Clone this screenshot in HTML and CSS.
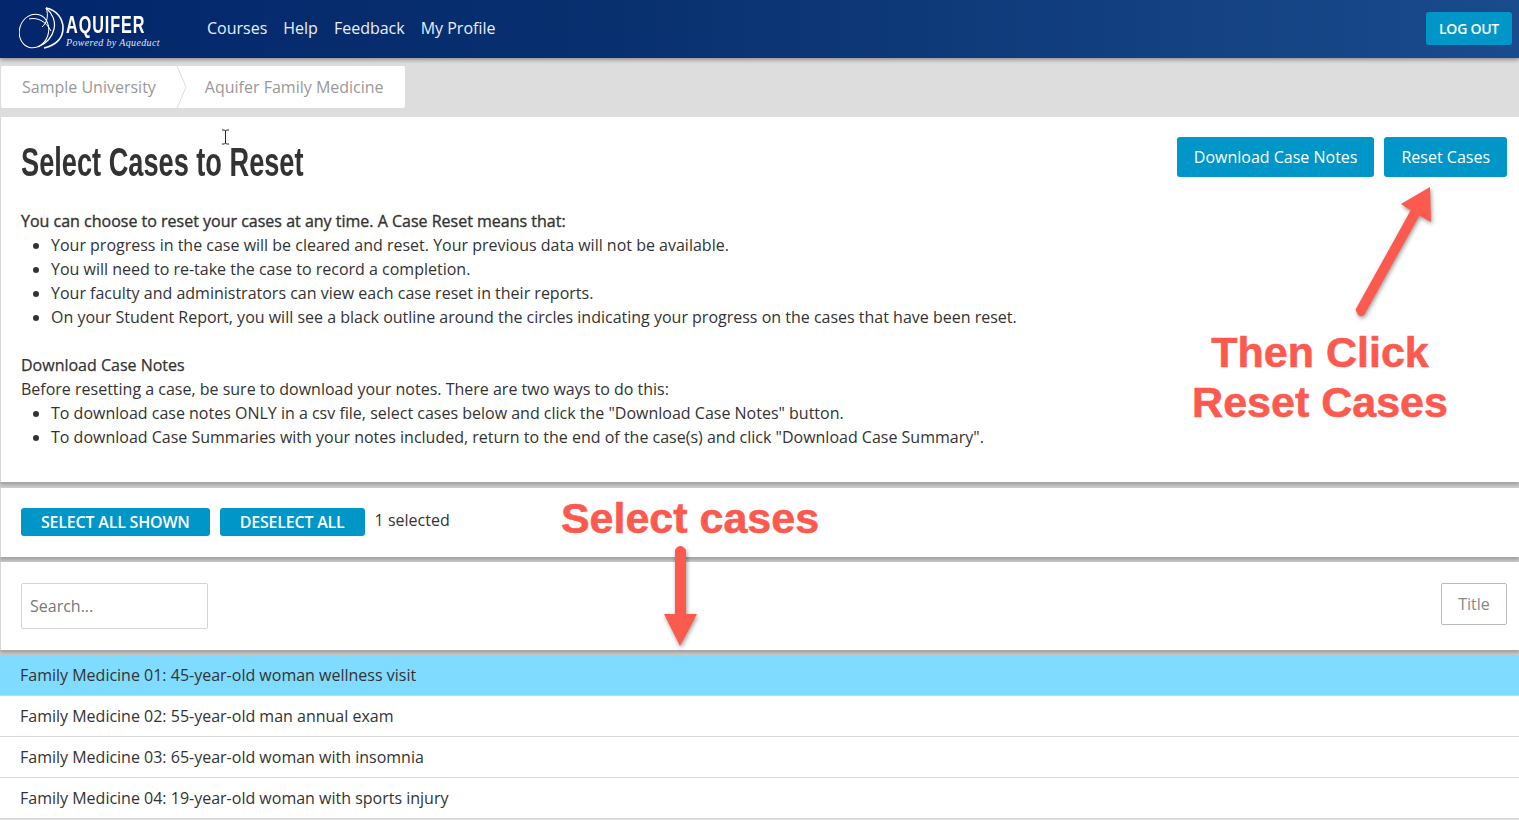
FILE: index.html
```html
<!DOCTYPE html>
<html lang="en">
<head>
<meta charset="utf-8">
<title>Select Cases to Reset</title>
<link rel="stylesheet" href="styles.css">
</head>
<body>
<header class="topbar">
  <a class="logo">
    <svg class="logo-mark" viewBox="0 0 46 44" width="46" height="44" fill="none" stroke="#fff">
      <path d="M27 1 C38 3 44 12 44 21 C44 31 37 38 25 41" stroke-width="1.6"/>
      <path d="M27 1 C33 6 37 14 35 22 C33 31 26 37 19 40" stroke-width="1.2"/>
      <path d="M27 1 C30 8 28 16 23 20" stroke-width="1"/>
      <ellipse cx="15" cy="24" rx="14.5" ry="17" stroke-width="1" transform="rotate(18 15 24)"/>
      <path d="M10 12 C18 10 27 14 32 24" stroke-width="1"/>
    </svg>
    <span class="logo-text">
      <span class="logo-name">AQUIFER</span>
      <span class="logo-sub">Powered by Aqueduct</span>
    </span>
  </a>
  <nav class="nav">
    <a>Courses</a><a>Help</a><a>Feedback</a><a>My Profile</a>
  </nav>
  <button class="btn logout">LOG OUT</button>
</header>

<div class="crumb-bar">
  <div class="crumbs">
    <span class="crumb">Sample University</span>
    <svg class="crumb-sep" width="12" height="42" viewBox="0 0 12 42" fill="none"><path d="M1 0 L10 21 L1 42" stroke="#ddd"/></svg>
    <span class="crumb second">Aquifer Family Medicine</span>
  </div>
</div>

<main>
  <section class="panel intro">
    <div class="intro-text">
      <h1><span class="title-text">Select Cases to Reset</span></h1>
      <p class="lead">You can choose to reset your cases at any time. A Case Reset means that:</p>
      <ul>
        <li>Your progress in the case will be cleared and reset. Your previous data will not be available.</li>
        <li>You will need to re-take the case to record a completion.</li>
        <li>Your faculty and administrators can view each case reset in their reports.</li>
        <li>On your Student Report, you will see a black outline around the circles indicating your progress on the cases that have been reset.</li>
      </ul>
      <p class="subhead">Download Case Notes</p>
      <p>Before resetting a case, be sure to download your notes. There are two ways to do this:</p>
      <ul>
        <li>To download case notes ONLY in a csv file, select cases below and click the "Download Case Notes" button.</li>
        <li>To download Case Summaries with your notes included, return to the end of the case(s) and click "Download Case Summary".</li>
      </ul>
    </div>
    <div class="actions">
      <button class="btn action">Download Case Notes</button>
      <button class="btn action">Reset Cases</button>
    </div>
  </section>

  <section class="panel selection">
    <button class="btn small">SELECT ALL SHOWN</button>
    <button class="btn small">DESELECT ALL</button>
    <span class="count">1 selected</span>
  </section>

  <section class="panel filters">
    <input class="search" type="text" placeholder="Search...">
    <button class="sort">Title</button>
  </section>

  <ul class="cases">
    <li class="case active">Family Medicine 01: 45-year-old woman wellness visit</li>
    <li class="case">Family Medicine 02: 55-year-old man annual exam</li>
    <li class="case">Family Medicine 03: 65-year-old woman with insomnia</li>
    <li class="case">Family Medicine 04: 19-year-old woman with sports injury</li>
  </ul>
</main>

<svg class="cursor" width="9" height="16" viewBox="0 0 9 16" fill="none" stroke="#222" stroke-width="1"><path d="M1 1 H3.5 L4.5 2 L5.5 1 H8 M4.5 2 V14 M1 15 H3.5 L4.5 14 L5.5 15 H8"/></svg>

<div class="note note-reset">Then Click<br>Reset Cases</div>
<div class="note note-select">Select cases</div>

<svg class="arrow arrow-up" width="90" height="140" viewBox="0 0 90 140">
  <path class="arrow-shape" d="M85 7 L86 42 L74.400 35.400 L19.400 134.400 Q14 140 10.600 129.600 L65.600 30.600 L56 24 Z"/>
</svg>
<svg class="arrow arrow-down" width="40" height="106" viewBox="0 0 40 106">
  <path class="arrow-shape" d="M15 7 Q20 -1 26 7 L26 71 L37 71 L20 103 L4 71 L15 71 Z"/>
</svg>
</body>
</html>
```
FILE: styles.css
```css
* { box-sizing: border-box; }
html, body { margin: 0; padding: 0; }
body {
  position: relative;
  height: 820px;
  overflow: hidden;
  background: #ddd;
  color: #333;
  font-family: "Open Sans", "Liberation Sans", sans-serif;
  font-size: 16px;
  line-height: 24px;
}
main { background: #ccc; }
.topbar {
  position: relative;
  height: 58px;
  display: flex;
  align-items: center;
  padding: 0 7px 0 19px;
  background: linear-gradient(90deg, #03266c 0%, #08306f 40%, #1a4b8d 100%);
  box-shadow: 0 2px 4px rgba(0,0,0,.35);
}
.logo { display: flex; align-items: center; width: 188px; color: #fff; }
.logo-mark { flex: none; }
.logo-text { display: flex; flex-direction: column; margin-left: 1px; padding-top: 3px; }
.logo-name {
  display: inline-block;
  transform: scaleX(.675);
  transform-origin: left center;
  font-family: "Liberation Sans", sans-serif;
  font-weight: 700;
  font-size: 24px;
  line-height: 24px;
  letter-spacing: 1.4px;
}
.logo-sub {
  font-family: "Liberation Serif", serif;
  font-style: italic;
  font-size: 10px;
  line-height: 11px;
  letter-spacing: .35px;
  color: #dfe6f2;
}
.nav { display: flex; gap: 16px; color: #e8eef7; padding-bottom: 2px; }
.btn {
  border: 0;
  border-radius: 3px;
  background: #0096c8;
  color: #fff;
  font-family: "Open Sans", "Liberation Sans", sans-serif;
}
.logout {
  margin-left: auto;
  margin-bottom: 1px;
  height: 33px;
  width: 86px;
  font-size: 14px;
  font-weight: 600;
  letter-spacing: -.25px;
}
.crumb-bar { height: 59px; padding-top: 8px; }
.crumbs {
  display: flex;
  align-items: center;
  width: 404px;
  height: 42px;
  margin-left: 1px;
  padding-left: 21px;
  background: #fff;
  border-radius: 2px;
  color: #999;
}
.crumb-sep { flex: none; margin-left: 20px; }
.crumb.second { margin-left: 17px; }
.panel {
  background: #fff;
  border-left: 1px solid #d8d8d8;
  box-shadow: 0 3px 3px rgba(0,0,0,.2);
}
.intro {
  display: flex;
  justify-content: space-between;
  height: 365px;
  padding: 20px 12px 0 20px;
}
h1 {
  margin: 0 0 23px;
  height: 49px;
  font-size: 41px;
  line-height: 47px;
  font-weight: 700;
  white-space: nowrap;
  color: #333;
}
.title-text {
  display: inline-block;
  transform: scaleX(.663);
  transform-origin: left center;
  font-family: "Liberation Sans", sans-serif;
}
p { margin: 0; }
.lead { -webkit-text-stroke: .35px #333; }
.subhead { margin-top: 24px; -webkit-text-stroke: .25px #333; }
.intro-text { color: #333; }
ul { margin: 0; padding: 0 0 0 30px; }
.actions { display: flex; gap: 10px; align-items: flex-start; }
.action { height: 40px; padding: 0 17px; font-size: 16px; }
.selection {
  display: flex;
  align-items: flex-start;
  height: 69px;
  margin-top: 6px;
  padding: 20px 0 0 20px;
}
.small {
  height: 28px;
  padding: 0 20px;
  margin-right: 10px;
  font-size: 16px;
  font-weight: 600;
  letter-spacing: -.2px;
}
.count { line-height: 24px; }
.filters {
  display: flex;
  justify-content: space-between;
  align-items: flex-start;
  height: 88px;
  margin-top: 5px;
  padding: 21px 12px 0 20px;
}
.search {
  width: 187px;
  height: 46px;
  padding: 0 8px;
  border: 1px solid #d4d4d4;
  border-radius: 2px;
  font: 16px "Open Sans", "Liberation Sans", sans-serif;
  color: #333;
}
.search::placeholder { color: #777; opacity: 1; }
.sort {
  width: 66px;
  height: 42px;
  background: #fff;
  border: 1px solid #bbb;
  border-radius: 2px;
  color: #888;
  font: 16px "Open Sans", "Liberation Sans", sans-serif;
}
.cases { list-style: none; margin: 5px 0 0; padding: 0; background: #fff; }
.case {
  height: 41px;
  padding: 8px 20px 0;
  border-bottom: 1px solid #d8d8d8;
  color: #333;
}
.case.active { background: #7fdbff; border-bottom-color: #a6e5ff; }
.note {
  position: absolute;
  font-family: "Liberation Sans", Arial, sans-serif;
  font-weight: 700;
  font-size: 43px;
  line-height: 50px;
  color: #fc5a4f;
  text-align: center;
  -webkit-text-stroke: .6px #fc5a4f;
}
.note-reset { left: 1150px; top: 327px; width: 340px; }
.note-select { left: 540px; top: 493px; width: 300px; }
.arrow { position: absolute; overflow: visible; }
.arrow-up { left: 1345px; top: 180px; }
.arrow-down { left: 660px; top: 543px; }
.arrow-shape { fill: #fc5a4f; filter: drop-shadow(1px 2px 2px rgba(0,0,0,.4)); }
.cursor { position: absolute; left: 221px; top: 129px; }
```
